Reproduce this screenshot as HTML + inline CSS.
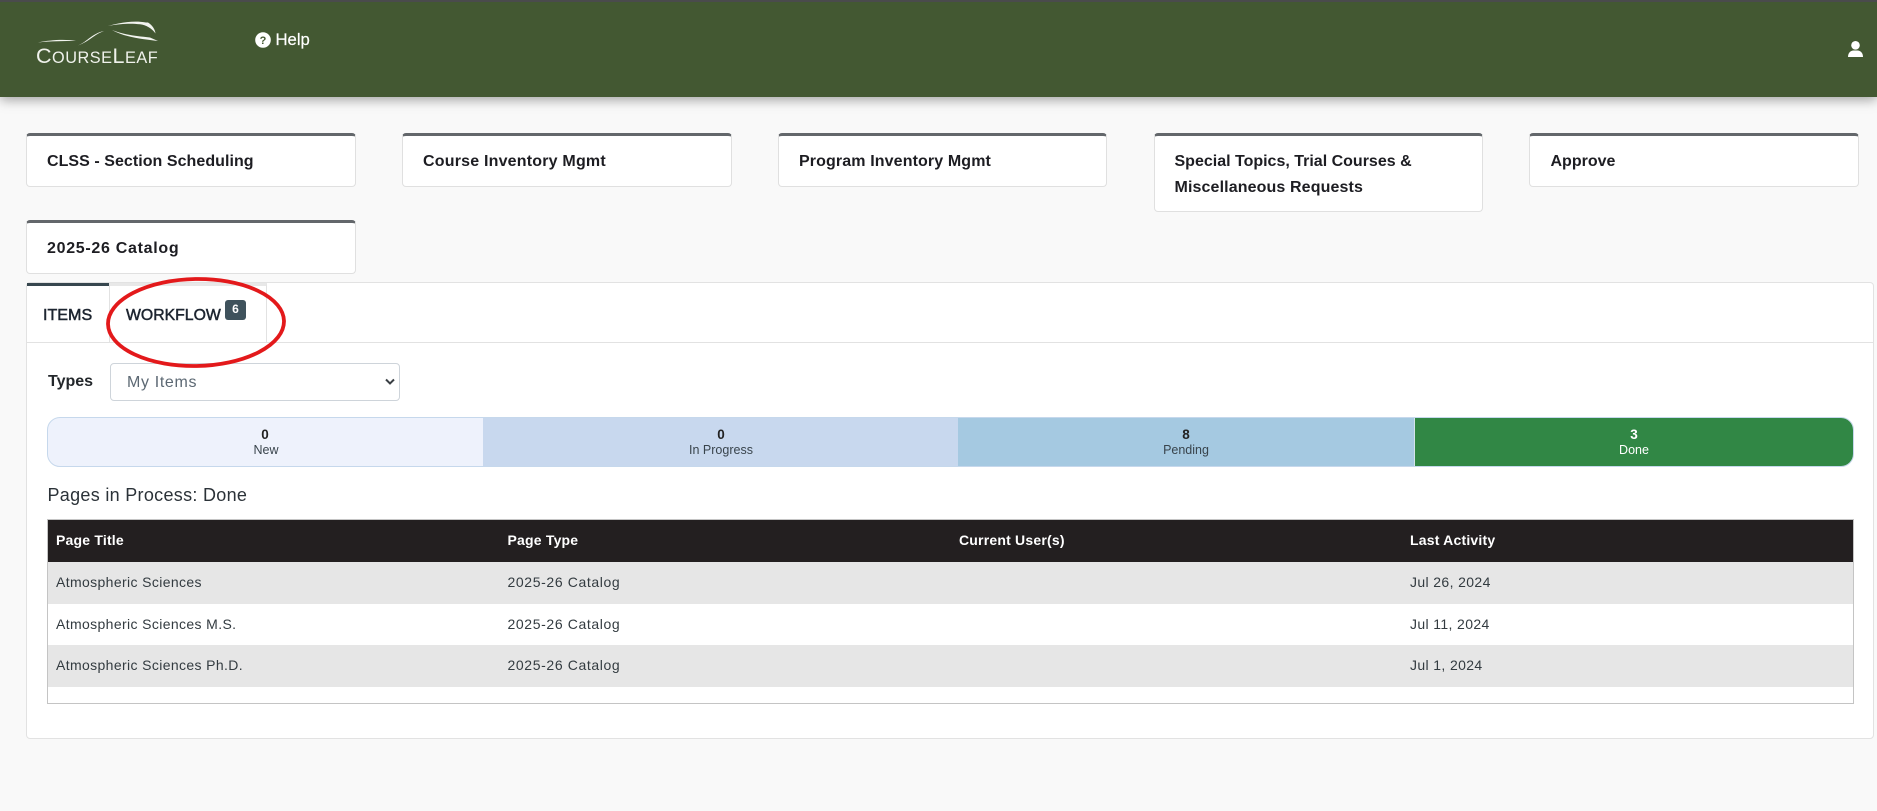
<!DOCTYPE html>
<html lang="en"><head><meta charset="utf-8"><title>CourseLeaf</title>
<style>
html,body{margin:0;padding:0;width:1877px;height:811px;overflow:hidden;background:#f9f9f9;font-family:"Liberation Sans",sans-serif;color:#222}
div,span{box-sizing:border-box}
.a{position:absolute}
.t{position:absolute;white-space:nowrap;line-height:20px}
.card{position:absolute;width:330px;background:#fff;border:1px solid #e0e0e0;border-top:3px solid #63676b;border-radius:4px;}
.ct{font-size:16px;font-weight:700;color:#1d1d22}
.th{font-size:14px;font-weight:700;color:#fff;letter-spacing:.2px}
.td{font-size:14px;color:#333b40;letter-spacing:.37px}
.cat{letter-spacing:.62px}
.n{position:absolute;width:100px;text-align:center;font-size:13.5px;font-weight:700;line-height:16px;color:#222}
.l{position:absolute;width:120px;text-align:center;font-size:12.5px;line-height:16px;color:#39444c}
</style></head><body>

<div class="a" style="left:0;top:0;width:1877px;height:97px;background:#435832;border-top:2px solid #4a4b4c;box-shadow:0 3px 11px rgba(0,0,0,.35)"></div>

<svg class="a" style="left:0;top:0" width="200" height="60" viewBox="0 0 200 60">
<g fill="#f2f4ef">
<path d="M38 42.5C50 40 65 39 76 41C65 41 50 41 38 42.500Z"/>
<path d="M78 45.500C88 41 92 33.500 104 31C94 34.500 90 41 78 45.500Z"/>
<path d="M108 26C122 22 135 20.500 146 22.500L148 22.500C152 25 155 29 155.500 33.500C152 28.500 146 25 140 24.300C130 23 118 24 108 26Z"/>
<path d="M112 30C125 35 135 36 150 37.500L158 41C145 39.500 125 37.500 112 30Z"/>
</g></svg>
<div class="t" style="left:36px;top:44.500px;color:#f0f2ec;line-height:22px;letter-spacing:.52px;font-size:16.300px"><span style="font-size:21.500px">C</span>OURSE<span style="font-size:21.500px">L</span>EAF</div>

<svg class="a" style="left:255px;top:32px" width="16" height="16" viewBox="0 0 16 16"><circle cx="8" cy="8" r="7.800" fill="#fff"/><text x="8" y="12" text-anchor="middle" font-family="Liberation Sans" font-weight="700" font-size="11" fill="#435832">?</text></svg>
<div class="t" style="left:275.500px;top:30px;font-size:16.700px;color:#fff;-webkit-text-stroke:.2px #fff">Help</div>

<svg class="a" style="left:1848px;top:41px" width="15" height="16" viewBox="0 0 15 16"><circle cx="7.500" cy="4.300" r="4.300" fill="#fff"/><path d="M0 16C0 12 2.500 9.500 5.500 9.500H9.500C12.500 9.500 15 12 15 16Z" fill="#fff"/></svg>

<div class="card" style="left:26px;top:133px;height:54px"></div>
<div class="t ct" style="left:47px;top:151.500px;letter-spacing:.05px">CLSS - Section Scheduling</div>
<div class="card" style="left:402px;top:133px;height:54px"></div>
<div class="t ct" style="left:423px;top:151.500px;letter-spacing:.2px">Course Inventory Mgmt</div>
<div class="card" style="left:778px;top:133px;height:54px;width:329px"></div>
<div class="t ct" style="left:799px;top:151.500px;letter-spacing:.12px">Program Inventory Mgmt</div>
<div class="card" style="left:1153.500px;top:133px;height:79px;width:329px"></div>
<div class="t ct" style="left:1174.500px;top:151.500px">Special Topics, Trial Courses &amp;</div>
<div class="t ct" style="left:1174.500px;top:177.500px;letter-spacing:.12px">Miscellaneous Requests</div>
<div class="card" style="left:1529px;top:133px;height:54px"></div>
<div class="t ct" style="left:1550.500px;top:151.500px">Approve</div>
<div class="card" style="left:26px;top:220px;height:54px"></div>
<div class="t ct" style="left:47px;top:238.500px;letter-spacing:.7px">2025-26 Catalog</div>

<div class="a" style="left:26px;top:282px;width:1848px;height:457px;background:#fff;border:1px solid #e2e2e2;border-radius:4px"></div>
<div class="a" style="left:27px;top:342px;width:1846px;height:1px;background:#e2e2e2"></div>
<div class="a" style="left:27px;top:283px;width:83px;height:3px;background:#37474f"></div>
<div class="a" style="left:109px;top:283px;width:158px;height:60px;border-left:1px solid #e2e2e2;border-right:1px solid #e2e2e2;border-top:3px solid #e8e8e8"></div>
<div class="t" style="left:43px;top:304.500px;font-size:16.100px;color:#1d2530;-webkit-text-stroke:.5px #1d2530">ITEMS</div>
<div class="t" style="left:126px;top:305.500px;font-size:15.800px;color:#1d2530;-webkit-text-stroke:.5px #1d2530">WORKFLOW</div>
<div class="a" style="left:225px;top:300px;width:21px;height:20px;background:#3f525c;border-radius:3px;color:#fff;font-size:12px;font-weight:700;text-align:center;line-height:18px">6</div>

<div class="t" style="left:48px;top:371.500px;font-size:16px;font-weight:700;color:#23272b">Types</div>
<div class="a" style="left:110px;top:363px;width:290px;height:38px;border:1px solid #ced4da;border-radius:4px;background:#fff"></div>
<div class="t" style="left:127px;top:373px;font-size:16px;letter-spacing:.65px;color:#5c6873">My Items</div>
<svg class="a" style="left:384px;top:377px" width="12" height="10" viewBox="0 0 12 10"><path d="M2 2.500L6 6.500L10 2.500" fill="none" stroke="#3a3f44" stroke-width="2"/></svg>

<div class="a" style="left:47px;top:417px;width:1807px;height:50px;border:1px solid #c6d8ec;border-radius:13px;overflow:hidden;background:#eef2fc">
  <div class="a" style="left:435px;top:0;width:475px;height:48px;background:#c8d8ee"></div>
  <div class="a" style="left:910px;top:0;width:457px;height:48px;background:#a5c9e1"></div>
  <div class="a" style="left:1366px;top:-1px;width:441px;height:50px;background:#318745;border-left:1px solid #d4e4ec"></div>
</div>
<div class="n" style="left:215px;top:426.500px">0</div><div class="l" style="left:206px;top:442px">New</div>
<div class="n" style="left:671px;top:426.500px">0</div><div class="l" style="left:661px;top:442px">In Progress</div>
<div class="n" style="left:1136px;top:426.500px">8</div><div class="l" style="left:1126px;top:442px">Pending</div>
<div class="n" style="left:1584px;top:426.500px;color:#fff">3</div><div class="l" style="left:1574px;top:442px;color:#fff">Done</div>

<div class="t" style="left:47.500px;top:485px;font-size:18px;letter-spacing:.3px;color:#2b3238">Pages in Process: Done</div>

<div class="a" style="left:47px;top:519px;width:1807px;height:185px;border:1px solid #c4c4c4;background:#fff"></div>
<div class="a" style="left:48px;top:520px;width:1805px;height:42px;background:#231f20"></div>
<div class="a" style="left:48px;top:562px;width:1805px;height:42px;background:#e6e6e6"></div>
<div class="a" style="left:48px;top:645px;width:1805px;height:42px;background:#e6e6e6"></div>

<div class="t th" style="left:56px;top:530px">Page Title</div>
<div class="t th" style="left:507.500px;top:530px">Page Type</div>
<div class="t th" style="left:959px;top:530px">Current User(s)</div>
<div class="t th" style="left:1410px;top:530px">Last Activity</div>

<div class="t td" style="left:56px;top:572px">Atmospheric Sciences</div>
<div class="t td cat" style="left:507.500px;top:572px">2025-26 Catalog</div>
<div class="t td" style="left:1410px;top:572px">Jul 26, 2024</div>
<div class="t td" style="left:56px;top:614px">Atmospheric Sciences M.S.</div>
<div class="t td cat" style="left:507.500px;top:614px">2025-26 Catalog</div>
<div class="t td" style="left:1410px;top:614px">Jul 11, 2024</div>
<div class="t td" style="left:56px;top:655px">Atmospheric Sciences Ph.D.</div>
<div class="t td cat" style="left:507.500px;top:655px">2025-26 Catalog</div>
<div class="t td" style="left:1410px;top:655px">Jul 1, 2024</div>

<svg class="a" style="left:100px;top:271px" width="195" height="105" viewBox="0 0 195 105"><ellipse cx="96" cy="51.500" rx="88" ry="43.500" transform="rotate(-1 96 51.500)" fill="none" stroke="#e3191b" stroke-width="3.800"/></svg>

</body></html>
